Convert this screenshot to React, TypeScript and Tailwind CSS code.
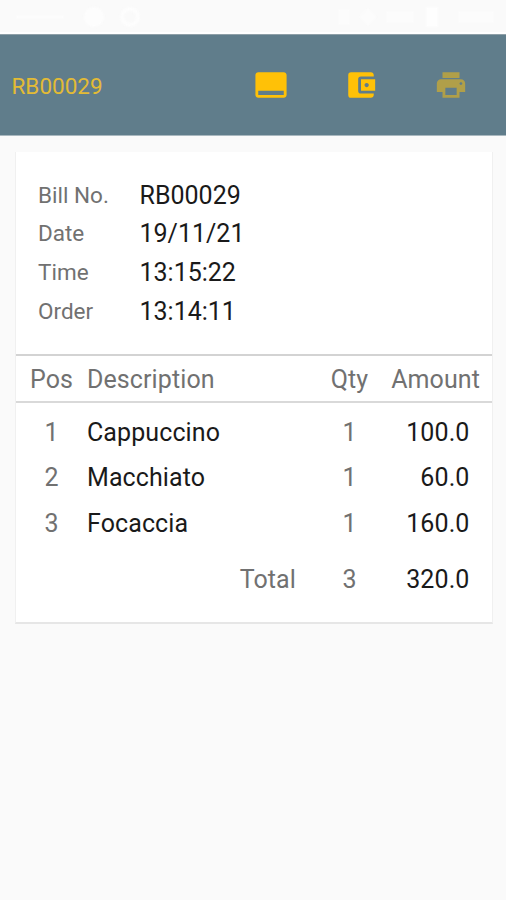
import { MdAccountBalanceWallet, MdCallToAction, MdPrint } from 'react-icons/md';

const details = [
  { label: 'Bill No.', value: 'RB00029' },
  { label: 'Date', value: '19/11/21' },
  { label: 'Time', value: '13:15:22' },
  { label: 'Order', value: '13:14:11' },
];

const items = [
  { pos: 1, description: 'Cappuccino', qty: 1, amount: '100.0' },
  { pos: 2, description: 'Macchiato', qty: 1, amount: '60.0' },
  { pos: 3, description: 'Focaccia', qty: 1, amount: '160.0' },
];

const StatusBar = () => (
  <div className="h-[34px] pl-4 pr-3 pt-px flex items-center justify-between border-b-2 border-white">
    <div className="flex items-center gap-3 blur-[1px]">
      <span className="w-12 h-1 bg-[#fcfcfc]" />
      <span className="ml-2 w-5 h-5 rounded-full bg-[#fdfdfd]" />
      <span className="ml-1 w-5 h-5 rounded-full border-4 border-[#fdfdfd]" />
    </div>
    <div className="flex items-center gap-3 blur-[1px]">
      <span className="w-3 h-4 bg-[#fcfcfc]" />
      <span className="w-3 h-3 rotate-45 bg-[#fcfcfc]" />
      <span className="w-7 h-3 bg-[#fcfcfc]" />
      <span className="w-3 h-5 bg-[#fefefe]" />
      <span className="ml-2 w-9 h-3 bg-[#fcfcfc]" />
    </div>
  </div>
);

const App = () => {
  return (
    <div className="h-[900px] w-[506px] overflow-hidden bg-[#fafafa] font-['Roboto',sans-serif] text-[#717171]">
      <StatusBar />

      {/* Toolbar */}
      <header className="h-[102px] pl-[11.5px] pr-[38.5px] flex items-center justify-between bg-[#607d8b] border-t border-t-[#8fa0a8] border-b border-b-[#a9b8bf]">
        <h1 className="pt-[3px] text-[22.5px] text-[#e3bb35]">RB00029</h1>
        <div className="flex items-center gap-14 text-[#ffc107]">
          <MdCallToAction className="w-[34px] h-[34px]" />
          <MdAccountBalanceWallet className="w-[34px] h-[34px]" />
          <MdPrint className="w-[34px] h-[34px] text-[#b09f49]" />
        </div>
      </header>

      {/* Bill */}
      <main className="mt-4 ml-[15px] w-[478px] h-[472px] bg-white border border-t-0 border-[#f0f0f0] border-b-2 border-b-[#e6e6e6]">
        <dl className="h-[204px] pt-[25px] pl-[22px] border-b-2 border-[#d3d3d3]">
          {details.map((row) => (
            <div key={row.label} className="h-[39px] first:h-[37px] flex items-center">
              <dt className="w-[101.5px] text-[22.5px]">{row.label}</dt>
              <dd className="text-[25px] text-[#1a1a1a]">{row.value}</dd>
            </div>
          ))}
        </dl>

        <table className="w-full table-fixed text-[25px] leading-[30px] tracking-[0.1px]">
          <colgroup>
            <col className="w-[71px]" />
            <col />
            <col className="w-[69px]" />
            <col className="w-[108px]" />
          </colgroup>
          <thead>
            <tr className="h-[46px] border-b-2 border-[#d9d9d9]">
              <th className="font-normal pt-0.5">Pos</th>
              <th className="font-normal pt-0.5 text-left">Description</th>
              <th className="font-normal pt-0.5">Qty</th>
              <th className="font-normal pt-0.5 text-right pr-3">Amount</th>
            </tr>
          </thead>
          <tbody>
            <tr className="h-[8px]" />
            {items.map((item) => (
              <tr key={item.pos} className="h-[45.5px]">
                <td className="text-center">{item.pos}</td>
                <td className="text-[#1a1a1a]">{item.description}</td>
                <td className="text-center">{item.qty}</td>
                <td className="text-right pr-[22.5px] text-[#1a1a1a]">{item.amount}</td>
              </tr>
            ))}
          </tbody>
          <tfoot>
            <tr className="h-[67px]">
              <td />
              <td className="text-right pr-[19px]">Total</td>
              <td className="text-center">3</td>
              <td className="text-right pr-[22.5px] text-[#1a1a1a]">320.0</td>
            </tr>
          </tfoot>
        </table>
      </main>
    </div>
  );
};

export default App;
